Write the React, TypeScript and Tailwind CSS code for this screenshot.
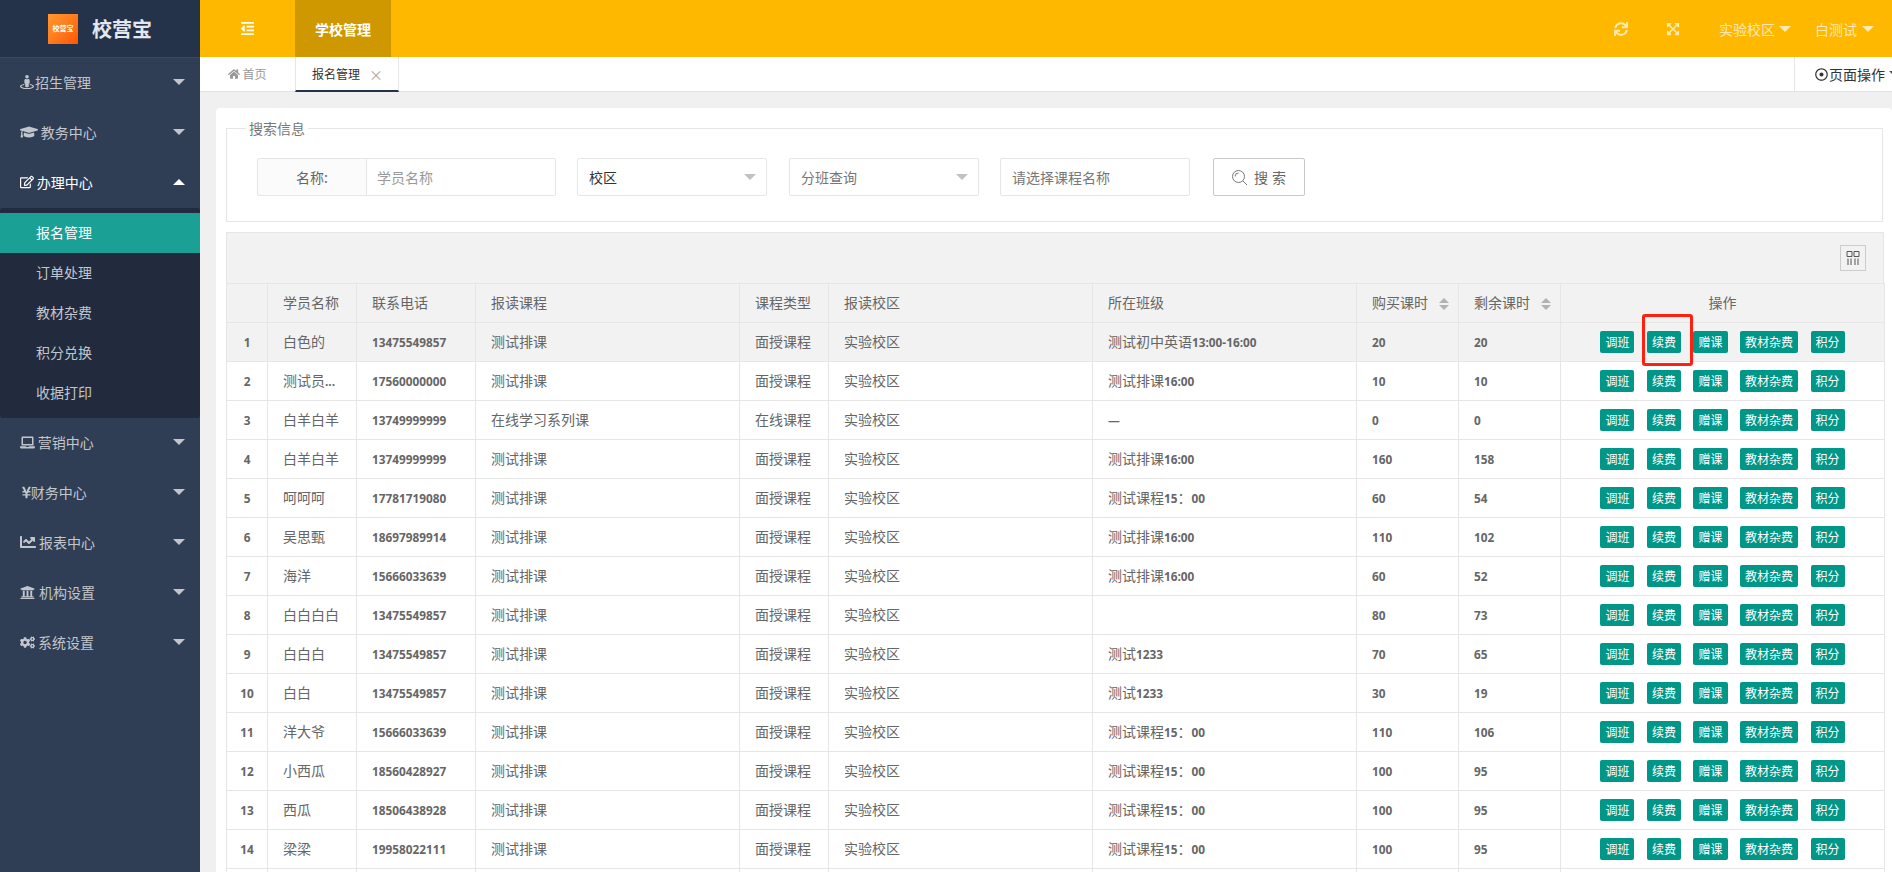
import React from "react";
import {
  FaStreetView,
  FaGraduationCap,
  FaRegEdit,
  FaLaptop,
  FaYenSign,
  FaChartLine,
  FaUniversity,
  FaCogs,
  FaOutdent,
  FaSync,
  FaExpandArrowsAlt,
  FaHome,
  FaRegDotCircle,
} from "react-icons/fa";

const cjk = "font-['Noto_Sans_CJK_SC',sans-serif]";

const rows = [
  ["白色的", "13475549857", "测试排课", "面授课程", "测试初中英语13:00-16:00", "20", "20"],
  ["测试员...", "17560000000", "测试排课", "面授课程", "测试排课16:00", "10", "10"],
  ["白羊白羊", "13749999999", "在线学习系列课", "在线课程", "—", "0", "0"],
  ["白羊白羊", "13749999999", "测试排课", "面授课程", "测试排课16:00", "160", "158"],
  ["呵呵呵", "17781719080", "测试排课", "面授课程", "测试课程15：00", "60", "54"],
  ["吴思甄", "18697989914", "测试排课", "面授课程", "测试排课16:00", "110", "102"],
  ["海洋", "15666033639", "测试排课", "面授课程", "测试排课16:00", "60", "52"],
  ["白白白白", "13475549857", "测试排课", "面授课程", "", "80", "73"],
  ["白白白", "13475549857", "测试排课", "面授课程", "测试1233", "70", "65"],
  ["白白", "13475549857", "测试排课", "面授课程", "测试1233", "30", "19"],
  ["洋大爷", "15666033639", "测试排课", "面授课程", "测试课程15：00", "110", "106"],
  ["小西瓜", "18560428927", "测试排课", "面授课程", "测试课程15：00", "100", "95"],
  ["西瓜", "18506438928", "测试排课", "面授课程", "测试课程15：00", "100", "95"],
  ["梁梁", "19958022111", "测试排课", "面授课程", "测试课程15：00", "100", "95"],
];

// digits in the table come out heavier than the chinese text
function Mixed({ text }: { text: string }) {
  const parts = text.split(/([0-9:\-—.]+)/);
  return (
    <>
      {parts.map((p, i) =>
        /^[0-9:\-—.]+$/.test(p) ? (
          <span key={i} className="font-['Open_Sans',sans-serif] font-bold text-[11.8px]">
            {p}
          </span>
        ) : (
          <span key={i}>{p}</span>
        )
      )}
    </>
  );
}

function Caret({ up, className }: { up?: boolean; className: string }) {
  return (
    <span
      className={`inline-block w-0 h-0 border-x-[6px] border-x-transparent ${
        up ? "border-b-[6px]" : "border-t-[6px]"
      } ${className}`}
    />
  );
}

function MenuItem({
  icon,
  box,
  label,
  open,
}: {
  icon: React.ReactNode;
  box: string;
  label: string;
  open?: boolean;
}) {
  return (
    <div className={`flex items-center h-[50px] pl-5 pr-[15px] pb-[2px] text-sm ${open ? "text-white" : "text-[#c2c6cc]"}`}>
      <span className={`shrink-0 ${box}`}>{icon}</span>
      {label}
      <Caret up={open} className={`ml-auto ${open ? "border-b-white" : "border-t-[#c2c6cc]"}`} />
    </div>
  );
}

function Sidebar() {
  const sub = ["报名管理", "订单处理", "教材杂费", "积分兑换", "收据打印"];
  return (
    <aside className="w-[200px] shrink-0 bg-[#2f3e55] flex flex-col">
      <div className="h-[58px] bg-[#25334a] border-b border-[#3c4a5f] flex items-center pl-12 shrink-0">
        <div className="w-[30px] h-[30px] bg-gradient-to-br from-[#ff9a2e] to-[#ff5500] flex items-center justify-center text-white text-[7px] font-bold">
          校营宝
        </div>
        <span className="ml-[14px] text-xl font-bold text-[#e4e8ee]">校营宝</span>
      </div>
      <MenuItem box="w-[15px]" icon={<FaStreetView className="text-[14px]" />} label="招生管理" />
      <MenuItem box="w-[20.7px]" icon={<FaGraduationCap className="text-[18px]" />} label="教务中心" />
      <MenuItem box="w-[16.7px]" icon={<FaRegEdit className="text-[14px]" />} label="办理中心" open />
      <div className="bg-[#212b3d] rounded-[3px] py-[5px] text-sm text-[#c2c6cc]">
        {sub.map((s, i) => (
          <div
            key={s}
            className={`h-10 flex items-center pl-9 pb-[2px] ${i === 0 ? "bg-[#1aa094] text-white" : ""}`}
          >
            {s}
          </div>
        ))}
      </div>
      <MenuItem box="w-[17.7px]" icon={<FaLaptop className="text-[15px]" />} label="营销中心" />
      <MenuItem box="w-[10.7px]" icon={<FaYenSign className="text-[13px]" />} label="财务中心" />
      <MenuItem box="w-[19px]" icon={<FaChartLine className="text-[16px]" />} label="报表中心" />
      <MenuItem box="w-[19px]" icon={<FaUniversity className="text-[15px]" />} label="机构设置" />
      <MenuItem box="w-[18px]" icon={<FaCogs className="text-[15px]" />} label="系统设置" />
    </aside>
  );
}

function TopBar() {
  return (
    <header className="h-[57px] shrink-0 bg-[#ffb800] flex items-center text-sm">
      <div className="w-[95px] flex justify-center">
        <FaOutdent className="text-white text-[15px]" />
      </div>
      <div className="w-[96px] h-full bg-[#cf9700] flex items-center justify-center text-white font-bold">
        学校管理
      </div>
      <div className="ml-auto flex items-center text-white/70">
        <FaSync className="text-[14px]" />
        <FaExpandArrowsAlt className="text-[14px] ml-[38px]" />
        <span className="ml-[39px]">实验校区</span>
        <Caret className="ml-[4px] border-t-white/70" />
        <span className="ml-6">白测试</span>
        <Caret className="ml-[5px] mr-[18px] border-t-white/70" />
      </div>
    </header>
  );
}

function TabBar() {
  return (
    <div className="h-[35px] shrink-0 bg-white border-b border-[#e2e2e2] flex items-stretch relative">
      <div className="w-[95px] flex items-center justify-center gap-[2px] text-xs text-[#999]">
        <FaHome className="text-[12px]" />
        首页
      </div>
      <div className="w-[104px] -mb-px flex items-center border-x border-[#e6e6e6] border-b-2 border-b-[#25334a] pl-4 text-xs text-[#333]">
        报名管理
        <span className="ml-[9px] text-[14px] leading-none text-[#aaa]">×</span>
      </div>
      <div className="ml-auto w-[98px] border-l border-[#e6e6e6] flex items-center pl-5 text-sm text-[#333] overflow-hidden whitespace-nowrap">
        <FaRegDotCircle className="text-[13px] shrink-0 mr-[1px]" />
        页面操作
        <Caret className="ml-[4px] border-t-[#555] shrink-0" />
      </div>
    </div>
  );
}

function SearchForm() {
  return (
    <fieldset className="border border-[#e6e6e6] h-[101px]">
      <legend className="ml-[19px] px-[3px] text-sm text-[#777] leading-none">搜索信息</legend>
      <div className="flex items-center h-[38px] mt-[23px] ml-[30px] text-sm">
        <div className="w-[110px] h-full bg-[#fbfbfb] border border-[#e6e6e6] rounded-l-[2px] flex items-center justify-center text-[#666]">
          名称:
        </div>
        <div className="w-[189px] h-full border border-l-0 border-[#e6e6e6] rounded-r-[2px] flex items-center pl-[10px] text-[#999]">
          学员名称
        </div>
        <div className="ml-[21px] w-[190px] h-full border border-[#e6e6e6] rounded-[2px] flex items-center pl-[11px] pr-[10px] text-[#333]">
          校区
          <Caret className="ml-auto border-t-[#c2c2c2]" />
        </div>
        <div className="ml-[22px] w-[190px] h-full border border-[#e6e6e6] rounded-[2px] flex items-center pl-[11px] pr-[10px] text-[#777]">
          分班查询
          <Caret className="ml-auto border-t-[#c2c2c2]" />
        </div>
        <div className="ml-[21px] w-[190px] h-full border border-[#e6e6e6] rounded-[2px] flex items-center pl-[11px] text-[#777]">
          请选择课程名称
        </div>
        <div className="ml-[23px] w-[92px] h-full border border-[#c9c9c9] rounded-[2px] flex items-center justify-center gap-[6px] text-[#666]">
          <svg width="17" height="17" viewBox="0 0 17 17" fill="none" stroke="#777" strokeWidth="1">
            <circle cx="7.5" cy="7.5" r="6" />
            <path d="M12 12l4 4M4 7.5a3.5 3.5 0 0 1 3.5-3.5" />
          </svg>
          <span className="tracking-[4px] -mr-[3px]">搜索</span>
        </div>
      </div>
    </fieldset>
  );
}

function SortCaret() {
  return (
    <span className="inline-flex flex-col gap-[2px] ml-[11px] align-middle">
      <span className="w-0 h-0 border-x-[5px] border-x-transparent border-b-[5px] border-b-[#b2b2b2]" />
      <span className="w-0 h-0 border-x-[5px] border-x-transparent border-t-[5px] border-t-[#b2b2b2]" />
    </span>
  );
}

function DataTable() {
  const th = "border border-[#e6e6e6] px-[15px] pb-[2px] font-normal text-left whitespace-nowrap";
  const td = "border border-[#e6e6e6] px-[15px] pb-[2px] whitespace-nowrap";
  const ops = ["调班", "续费", "赠课", "教材杂费", "积分"];
  const widths = [41, 89, 119, 264, 89, 264, 264, 102, 102, 324];
  return (
    <div className="mt-[10px] w-[1658px] relative">
      <div className="h-[51px] bg-[#f2f2f2] border border-b-0 border-[#e6e6e6] flex items-center justify-end pr-[17px]">
        <div className="w-[26px] h-[26px] border border-[#ccc] flex items-center justify-center">
          <svg width="14" height="14" viewBox="0 0 14 14" fill="none" stroke="#555" strokeWidth="1">
            <path d="M1 .5h5v5H1zM8 .5h5v5H8zM2 7.5V14M5 7.5V14M9 7.5V14M12 7.5V14" />
          </svg>
        </div>
      </div>
      <table className="table-fixed border-collapse w-full text-sm text-[#666]">
        <colgroup>
          {widths.map((w, i) => (
            <col key={i} style={{ width: w }} />
          ))}
        </colgroup>
        <thead>
          <tr className="h-[39px] bg-[#f2f2f2]">
            <th className={th}></th>
            <th className={th}>学员名称</th>
            <th className={th}>联系电话</th>
            <th className={th}>报读课程</th>
            <th className={th}>课程类型</th>
            <th className={th}>报读校区</th>
            <th className={th}>所在班级</th>
            <th className={th}>
              购买课时
              <SortCaret />
            </th>
            <th className={th}>
              剩余课时
              <SortCaret />
            </th>
            <th className={`${th} !text-center`}>操作</th>
          </tr>
        </thead>
        <tbody>
          {rows.map((r, i) => (
            <tr key={i} className={`h-[39px] ${i === 0 ? "bg-[#f2f2f2]" : "bg-white"}`}>
              <td className={`${td} !px-0 text-center`}>
                <Mixed text={String(i + 1)} />
              </td>
              <td className={td}>
                <Mixed text={r[0]} />
              </td>
              <td className={td}>
                <Mixed text={r[1]} />
              </td>
              <td className={td}>{r[2]}</td>
              <td className={td}>{r[3]}</td>
              <td className={td}>实验校区</td>
              <td className={td}>
                <Mixed text={r[4]} />
              </td>
              <td className={td}>
                <Mixed text={r[5]} />
              </td>
              <td className={td}>
                <Mixed text={r[6]} />
              </td>
              <td className={`${td} !px-0 !pb-0`}>
                <div className="flex justify-center gap-[12.5px]">
                  {ops.map((o) => (
                    <span
                      key={o}
                      className="h-[22px] px-[5px] bg-[#009688] text-white text-xs leading-[22px] rounded-[2px]"
                    >
                      {o}
                    </span>
                  ))}
                </div>
              </td>
            </tr>
          ))}
          <tr className="h-[39px] bg-white">
            {widths.map((_, i) => (
              <td key={i} className={td}></td>
            ))}
          </tr>
        </tbody>
      </table>
      {/* red highlight drawn over the 续费 button of the first row */}
      <div className="absolute left-[1416px] top-[82px] w-[51px] h-[52px] border-[3px] border-[#ff2010] rounded-[3px] pointer-events-none" />
    </div>
  );
}

export default function App() {
  return (
    <div className={`flex h-screen overflow-hidden ${cjk}`}>
      <Sidebar />
      <div className="flex-1 min-w-0 flex flex-col">
        <TopBar />
        <TabBar />
        <main className="flex-1 overflow-hidden bg-[#f0f0f0] pt-4 pl-4">
          <div className="bg-white rounded-tl-[4px] rounded-tr-[4px] pl-[10px] pt-[13px] pr-[9px] h-[900px]">
            <SearchForm />
            <DataTable />
          </div>
        </main>
      </div>
    </div>
  );
}
